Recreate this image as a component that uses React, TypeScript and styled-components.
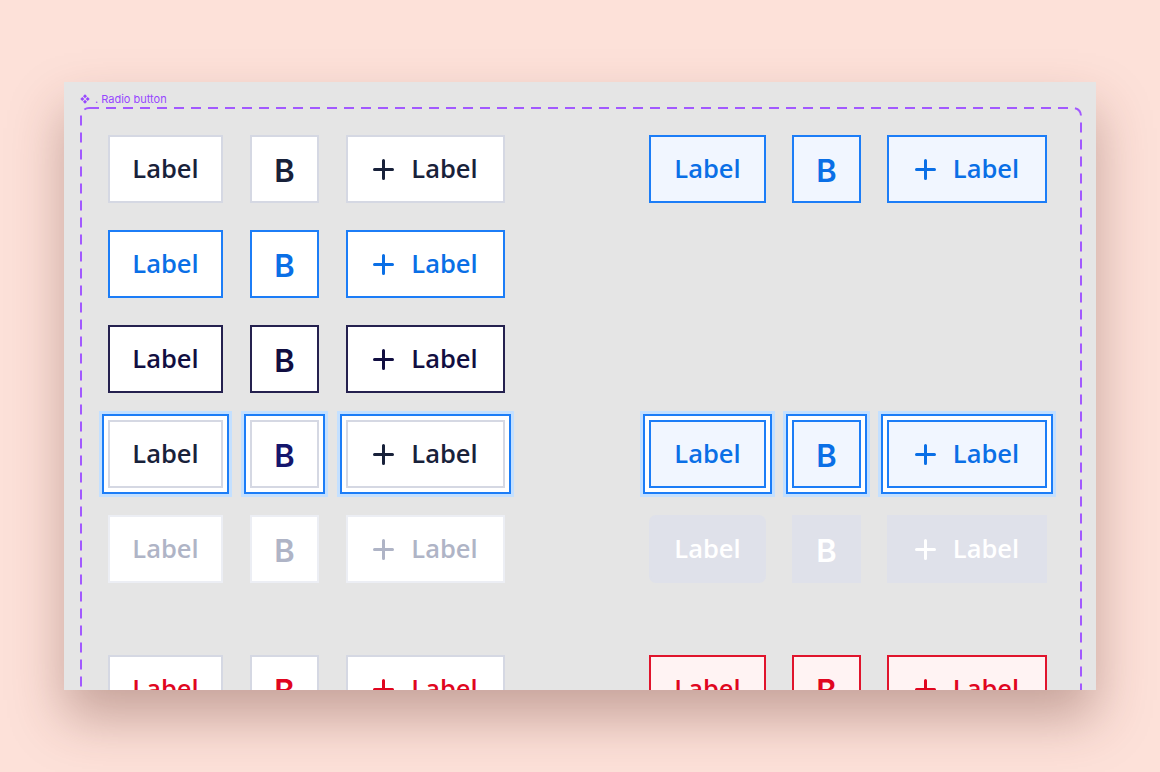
import React from 'react'
import styled, { createGlobalStyle, css } from 'styled-components'

type Variant = 'default' | 'hover' | 'pressed' | 'focus' | 'disabled' | 'error'

const GlobalStyle = createGlobalStyle`
    html, body {
        margin: 0;
        padding: 0;
        background: #fde1d9;
    }
    * {
        box-sizing: border-box;
    }
`

const Page = styled.div`
    width: 1160px;
    height: 772px;
    padding: 82px 0 0 64px;
    overflow: hidden;
`

const Canvas = styled.div`
    width: 1032px;
    height: 608px;
    background: #e5e5e5;
    overflow: hidden;
    padding: 11px 14px 0 16px;
    display: flex;
    flex-direction: column;
    box-shadow: 0 28px 50px rgba(95, 45, 35, 0.34);
`

const FrameTitle = styled.div`
    display: flex;
    align-items: center;
    gap: 5px;
    height: 12px;
    margin-bottom: 2px;
    color: #9747ff;
    font-family: Inter, 'Liberation Sans', sans-serif;
    font-size: 11px;
    line-height: 12px;
`

const Frame = styled.div`
    position: relative;
    flex: none;
    height: 720px;
    padding: 28px 0 0 28px;
    display: flex;
    flex-direction: column;
    gap: 27px;
`

const Dashes = styled.svg`
    position: absolute;
    inset: 1px;
    width: calc(100% - 2px);
    height: calc(100% - 2px);
    overflow: visible;
    pointer-events: none;
`

const Row = styled.div<{ $spaceBefore?: number }>`
    display: flex;
    gap: 144px;
    margin-top: ${(p) => p.$spaceBefore ?? 0}px;
`

const Group = styled.div<{ $gap: number }>`
    display: flex;
    gap: ${(p) => p.$gap}px;
`

const palette: Record<Variant, { bg: string; border: string; color: string }> = {
    default: { bg: '#ffffff', border: '#d5d8e3', color: '#18213a' },
    hover: { bg: '#ffffff', border: '#1c7df7', color: '#0a6fe6' },
    pressed: { bg: '#ffffff', border: '#25214f', color: '#110e41' },
    focus: { bg: '#ffffff', border: '#d5d8e3', color: '#18213a' },
    disabled: { bg: '#ffffff', border: '#eceef4', color: '#afb4c6' },
    error: { bg: '#ffffff', border: '#d5d8e3', color: '#e0061f' },
}

const selectedPalette: Record<Variant, { bg: string; border: string; color: string }> = {
    default: { bg: '#f1f6ff', border: '#1c7df7', color: '#0a6fe6' },
    hover: { bg: '#f1f6ff', border: '#1c7df7', color: '#0a6fe6' },
    pressed: { bg: '#f1f6ff', border: '#1c7df7', color: '#0a6fe6' },
    focus: { bg: '#f1f6ff', border: '#1c7df7', color: '#0a6fe6' },
    disabled: { bg: '#dfe1ea', border: '#dfe1ea', color: '#ffffff' },
    error: { bg: '#fff3f3', border: '#e0142c', color: '#e0061f' },
}

const Button = styled.button<{ $variant: Variant; $selected?: boolean; $w: number; $rounded?: boolean }>`
    ${(p) => {
        const c = (p.$selected ? selectedPalette : palette)[p.$variant]
        return css`
            background: ${c.bg};
            border: 2px solid ${c.border};
            color: ${c.color};
        `
    }}
    width: ${(p) => p.$w}px;
    height: 68px;
    padding: 0;
    border-radius: ${(p) => (p.$rounded ? 7 : 0)}px;
    display: flex;
    align-items: center;
    justify-content: center;
    gap: 17px;
    font-family: 'Open Sans', 'Noto Sans', sans-serif;
    font-weight: 600;
    font-size: 25.5px;
    line-height: 1;
    cursor: pointer;
    ${(p) =>
        p.$variant === 'focus' &&
        css`
            box-shadow: 0 0 0 4px #ffffff, 0 0 0 6px #1c7df7, 0 0 0 9px #c4e0ff;
        `}
`

const LabelText = styled.span`
    display: block;
`

const Letter = styled.span<{ $tint?: string }>`
    font-family: Inter, 'Liberation Sans', sans-serif;
    font-weight: 600;
    font-size: 31px;
    line-height: 1;
    margin-top: 3px;
    color: ${(p) => p.$tint ?? 'inherit'};
`

const PlusIcon = () => (
    <svg width="21" height="21" viewBox="0 0 21 21" fill="none">
        <path d="M10.5 1.5v18M1.5 10.5h18" stroke="currentColor" strokeWidth="3" strokeLinecap="round" />
    </svg>
)

const ComponentIcon = () => (
    <svg width="10" height="10" viewBox="0 0 10 10" fill="#9747ff">
        <path d="M5 0.3 7 2.3 5 4.3 3 2.3Z" />
        <path d="M5 5.7 7 7.7 5 9.7 3 7.7Z" />
        <path d="M2.3 3 4.3 5 2.3 7 0.3 5Z" />
        <path d="M7.7 3 9.7 5 7.7 7 5.7 5Z" />
    </svg>
)

const widths = {
    left: [115, 69, 159],
    right: [117, 69, 160],
}

const ButtonSet = ({
    variant,
    selected,
    letterTint,
    roundFirst,
}: {
    variant: Variant
    selected?: boolean
    letterTint?: string
    roundFirst?: boolean
}) => {
    const w = selected ? widths.right : widths.left
    return (
        <Group $gap={selected ? 26 : 27}>
            <Button $variant={variant} $selected={selected} $w={w[0]} $rounded={roundFirst}>
                <LabelText>Label</LabelText>
            </Button>
            <Button $variant={variant} $selected={selected} $w={w[1]}>
                <Letter $tint={letterTint}>B</Letter>
            </Button>
            <Button $variant={variant} $selected={selected} $w={w[2]}>
                <PlusIcon />
                <LabelText>Label</LabelText>
            </Button>
        </Group>
    )
}

export default function App() {
    return (
        <>
            <GlobalStyle />
            <Page>
                <Canvas>
                    <FrameTitle>
                        <ComponentIcon />
                        <span>. Radio button</span>
                    </FrameTitle>
                    <Frame>
                        <Dashes>
                            <rect
                                x="0"
                                y="0"
                                width="100%"
                                height="100%"
                                rx="8"
                                fill="none"
                                stroke="#a259ff"
                                strokeWidth="2"
                                strokeDasharray="10 7"
                            />
                        </Dashes>
                        <Row>
                            <ButtonSet variant="default" />
                            <ButtonSet variant="default" selected />
                        </Row>
                        <Row>
                            <ButtonSet variant="hover" />
                        </Row>
                        <Row>
                            <ButtonSet variant="pressed" />
                        </Row>
                        <Row>
                            <ButtonSet variant="focus" letterTint="#15166d" />
                            <ButtonSet variant="focus" selected />
                        </Row>
                        <Row>
                            <ButtonSet variant="disabled" />
                            <ButtonSet variant="disabled" selected roundFirst />
                        </Row>
                        <Row $spaceBefore={45}>
                            <ButtonSet variant="error" />
                            <ButtonSet variant="error" selected />
                        </Row>
                    </Frame>
                </Canvas>
            </Page>
        </>
    )
}
